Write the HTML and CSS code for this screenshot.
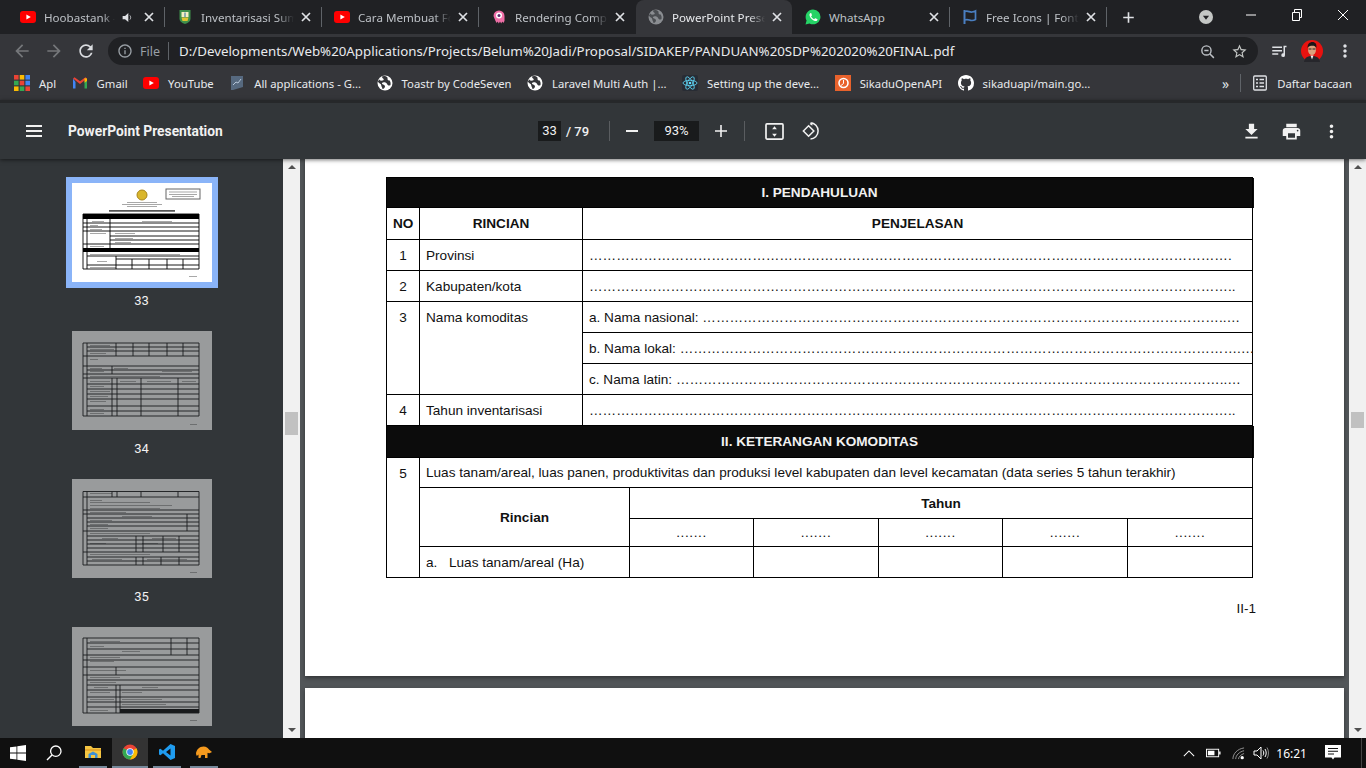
FILE: index.html
```html
<!DOCTYPE html>
<html lang="en">
<head>
    <meta charset="UTF-8">
    <meta name="viewport" content="width=device-width, initial-scale=1.0">
    <title>PowerPoint Presentation</title>
    <link rel="stylesheet" href="styles.css">
</head>
<body>
    <svg class="defs" aria-hidden="true">
        <symbol id="i-yt" viewBox="0 0 16 16"><rect x="0" y="2" width="16" height="12" rx="3" fill="#f00"/><path d="M6.4 5.4v5.2L10.8 8z" fill="#fff"/></symbol>
        <symbol id="i-globe" viewBox="0 0 16 16"><circle cx="8" cy="8" r="7.5" fill="#fff"/><path d="M5 1.4c-.2 1.4.9 1.7 1.6 2.5.6.8-.4 1.5-1.3 1.7-1.200.3-2.200-.1-3.100-1.200L.9 6.500c.5 1.400 1.600 1.700 2.700 2.400.7.500.6 1.300.8 2.100.2.900 1 1.600 1.200 3.300l1.200-.8c1.200-1.100 1.500-2 .9-3-.7-1-2.300-.8-2.700-1.700-.4-1 .6-1.500 1.800-1.600 1.500-.1 2.400.4 3.100 1.500.6 1 1.100 1.800 2.300 1.800l1.200-.2c.5-1.700.2-3.400-.7-4.900-.9.300-1.800 0-2.100-.8-.2-.7.100-1.500-.1-2.200C8.500.6 6.500.6 5 1.400z" fill="#35363a"/></symbol>
        <symbol id="i-x" viewBox="0 0 16 16"><path d="M4 4l8 8M12 4l-8 8" stroke="#dfe1e5" stroke-width="1.700" fill="none"/></symbol>
    </svg>

    <div class="tabstrip">
        <div class="tab">
            <svg class="fav"><use href="#i-yt"/></svg>
            <span class="tab-title">Hoobastank -</span>
            <svg class="speaker" viewBox="0 0 16 16"><path d="M2 6h3l4-3.500v11L5 10H2z" fill="#dfe1e5"/><path d="M11 5.500c1.200 1.500 1.200 3.500 0 5" stroke="#dfe1e5" fill="none"/></svg>
            <svg class="tab-x"><use href="#i-x"/></svg>
        </div>
        <i class="tab-sep"></i>
        <div class="tab">
            <svg class="fav" viewBox="0 0 16 16"><path d="M2.500 1h11v8.500c0 3-2.500 4.500-5.500 5.500-3-1-5.500-2.500-5.500-5.500z" fill="#3f8f4b"/><path d="M4.500 3h7v5h-7z" fill="#f3efc2"/><path d="M4.500 8.500h7l-1 3.500H5.500z" fill="#e0c431"/><path d="M8 3.500v4.500" stroke="#2d6b9f"/></svg>
            <span class="tab-title">Inventarisasi Sum</span>
            <svg class="tab-x"><use href="#i-x"/></svg>
        </div>
        <i class="tab-sep"></i>
        <div class="tab">
            <svg class="fav"><use href="#i-yt"/></svg>
            <span class="tab-title">Cara Membuat Fo</span>
            <svg class="tab-x"><use href="#i-x"/></svg>
        </div>
        <i class="tab-sep"></i>
        <div class="tab">
            <svg class="fav" viewBox="0 0 16 16"><path d="M2.500 7a5.500 5.500 0 0111 0v5l-1.200 2-1-1.500-1.100 2-1.200-2-1.200 2-1.100-2-1 1.500-1.200-2z" fill="#ef6fa7"/><circle cx="8" cy="6.500" r="3" fill="#fff"/><circle cx="8" cy="6.500" r="1.500" fill="#5a2a6e"/></svg>
            <span class="tab-title">Rendering Comp</span>
            <svg class="tab-x"><use href="#i-x"/></svg>
        </div>
        <i class="tab-sep off"></i>
        <div class="tab active">
            <svg class="fav" viewBox="0 0 16 16"><circle cx="8" cy="8" r="7.500" fill="#8a8d91"/><path d="M5 1.400c-.2 1.400.9 1.700 1.600 2.500.6.800-.4 1.500-1.300 1.700-1.200.3-2.200-.1-3.100-1.200L.9 6.500c.5 1.400 1.600 1.700 2.700 2.400.7.500.6 1.300.8 2.100.2.900 1 1.600 1.200 3.300l1.200-.8c1.200-1.100 1.500-2 .9-3-.7-1-2.300-.8-2.700-1.700-.4-1 .6-1.500 1.800-1.600 1.500-.1 2.400.4 3.100 1.500.6 1 1.100 1.800 2.300 1.800l1.200-.2c.5-1.700.2-3.400-.7-4.900-.9.300-1.800 0-2.100-.8-.2-.7.100-1.500-.1-2.200C8.500.6 6.500.6 5 1.400z" fill="#4b4e52"/></svg>
            <span class="tab-title">PowerPoint Prese</span>
            <svg class="tab-x"><use href="#i-x"/></svg>
        </div>
        <i class="tab-sep off"></i>
        <div class="tab">
            <svg class="fav" viewBox="0 0 16 16"><path d="M8 .5a7.400 7.400 0 00-6.400 11.100L.5 15.500l4-1.100A7.400 7.400 0 108 .5z" fill="#25d366"/><path d="M5.600 4c-.9.500-1.400 1.500-1 2.800.6 2.300 3 4.700 5.300 5.200 1.300.3 2.300-.2 2.600-1.200.1-.5-.1-.7-.5-.9l-1.500-.7c-.3-.1-.5 0-.7.200l-.6.800c-1.300-.4-2.600-1.600-3.100-2.900l.6-.6c.2-.2.300-.4.200-.7L6.300 4.300C6.100 4 5.900 3.900 5.600 4z" fill="#fff"/></svg>
            <span class="tab-title plain">WhatsApp</span>
            <svg class="tab-x"><use href="#i-x"/></svg>
        </div>
        <i class="tab-sep"></i>
        <div class="tab">
            <svg class="fav" viewBox="0 0 16 16"><path d="M2.500 1v14" stroke="#4a7fc1" stroke-width="2"/><path d="M3 2.500c3-1.200 4.500 1 7 .5 1.500-.2 2.500-.5 3.500-1v8.500c-1 .6-2.300 1-3.500 1-2.500.2-4-1.800-7-.5" stroke="#4a7fc1" stroke-width="1.700" fill="none"/></svg>
            <span class="tab-title">Free Icons | Font</span>
            <svg class="tab-x"><use href="#i-x"/></svg>
        </div>
        <i class="tab-sep"></i>
        <svg class="new-tab" viewBox="0 0 16 16"><path d="M8 1.500v13M1.500 8h13" stroke="#dfe1e5" stroke-width="2"/></svg>
        <svg class="tab-search" viewBox="0 0 16 16"><circle cx="8" cy="8" r="8" fill="#c4c7c5"/><path d="M4.500 6.500h7L8 11z" fill="#202124"/></svg>
        <div class="win-btns">
            <svg viewBox="0 0 46 30"><path d="M18 15h10" stroke="#fff"/></svg>
            <svg viewBox="0 0 46 30"><path d="M18.500 12.500h7v8h-7zM20.500 12v-2.500h7v8H26" stroke="#fff" fill="none"/></svg>
            <svg viewBox="0 0 46 30"><path d="M18 10l10 10M28 10L18 20" stroke="#fff"/></svg>
        </div>
    </div>

    <div class="toolbar">
        <svg class="nav dim" viewBox="0 0 24 24"><path d="M20 11H7.830l5.590-5.590L12 4l-8 8 8 8 1.410-1.410L7.830 13H20v-2z"/></svg>
        <svg class="nav dim" viewBox="0 0 24 24"><path d="M12 4l-1.410 1.410L16.170 11H4v2h12.170l-5.580 5.590L12 20l8-8z"/></svg>
        <svg class="nav" viewBox="0 0 24 24"><path d="M17.650 6.350A7.958 7.958 0 0012 4c-4.420 0-7.990 3.580-7.990 8s3.570 8 7.990 8c3.730 0 6.840-2.550 7.730-6h-2.080A5.990 5.990 0 0112 18c-3.310 0-6-2.690-6-6s2.690-6 6-6c1.660 0 3.140.690 4.220 1.780L13 11h7V4l-2.350 2.350z"/></svg>
        <div class="omnibox">
            <svg class="omni-icon" viewBox="0 0 24 24"><path d="M11 7h2v2h-2zm0 4h2v6h-2zm1-9C6.480 2 2 6.480 2 12s4.480 10 10 10 10-4.480 10-10S17.520 2 12 2zm0 18c-4.410 0-8-3.590-8-8s3.590-8 8-8 8 3.590 8 8-3.590 8-8 8z"/></svg>
            <span class="omni-file">File</span>
            <i class="omni-sep"></i>
            <span class="omni-url">D:/Developments/Web%20Applications/Projects/Belum%20Jadi/Proposal/SIDAKEP/PANDUAN%20SDP%202020%20FINAL.pdf</span>
            <svg class="omni-zoom" viewBox="0 0 24 24"><circle cx="10.500" cy="10.500" r="6.500" fill="none" stroke="#bdc1c6" stroke-width="2"/><path d="M15.500 15.500L21 21M7.500 10.500h6" stroke="#bdc1c6" stroke-width="2"/></svg>
            <svg class="omni-star" viewBox="0 0 24 24"><path d="M22 9.240l-7.190-.620L12 2 9.190 8.630 2 9.240l5.460 4.730L5.820 21 12 17.270 18.180 21l-1.630-7.030L22 9.240zM12 15.400l-3.760 2.270 1-4.280-3.320-2.880 4.380-.380L12 6.100l1.710 4.040 4.380.380-3.320 2.880 1 4.280L12 15.400z"/></svg>
        </div>
        <svg class="queue" viewBox="0 0 24 24"><path d="M3 6h13v2H3zM3 10.500h13v2H3zM3 15h8v2H3z"/><path d="M18 5h4v2h-2v10.500a2.500 2.500 0 11-2-2.400z"/></svg>
        <svg class="avatar" viewBox="0 0 22 22"><circle cx="11" cy="11" r="11" fill="#e8120f"/><path d="M3 22c.5-4.500 4-6 8-6s7.500 1.500 8 6z" fill="#26262b"/><path d="M9.500 15.500h3l-1.500 4z" fill="#f1f1f1"/><ellipse cx="11" cy="9.500" rx="4" ry="5.500" fill="#d9a27e"/><path d="M6.700 8c-.5-4 2-6 4.800-6s4.600 2.300 3.800 6c-.7-1.800-2-2.300-4-2.300S7.500 6 6.700 8z" fill="#1b1416"/><path d="M7.500 9h3M11.500 9h3" stroke="#222"/></svg>
        <svg class="more" viewBox="0 0 24 24"><path d="M12 8c1.100 0 2-.9 2-2s-.9-2-2-2-2 .9-2 2 .9 2 2 2zm0 2c-1.100 0-2 .9-2 2s.9 2 2 2 2-.9 2-2-.9-2-2-2zm0 6c-1.100 0-2 .9-2 2s.9 2 2 2 2-.9 2-2-.9-2-2-2z"/></svg>
    </div>

    <div class="bookmarks">
        <a class="bm">
            <svg viewBox="0 0 14 14"><path fill="#ea4335" d="M0 0h4v4H0z"/><path fill="#fbbc04" d="M5 0h4v4H5z"/><path fill="#4285f4" d="M10 0h4v4h-4z"/><path fill="#34a853" d="M0 5h4v4H0z"/><path fill="#ea4335" d="M5 5h4v4H5z"/><path fill="#4285f4" d="M10 5h4v4h-4z"/><path fill="#fbbc04" d="M0 10h4v4H0z"/><path fill="#34a853" d="M5 10h4v4H5z"/><path fill="#ea4335" d="M10 10h4v4h-4z"/></svg>
            Apl
        </a>
        <a class="bm">
            <svg viewBox="0 0 16 16"><path d="M1 3.500v10h2.500V7z" fill="#4285f4"/><path d="M12.500 7v6.500H15v-10z" fill="#34a853"/><path d="M1 3.500L8 9l7-5.500-1.500-1.300L8 6.300 2.500 2.200z" fill="#ea4335"/><path d="M12.500 3.300L15 3.500V6l-2.500 1.800z" fill="#fbbc04"/></svg>
            Gmail
        </a>
        <a class="bm"><svg><use href="#i-yt"/></svg>YouTube</a>
        <a class="bm">
            <svg viewBox="0 0 16 16"><path d="M2 1h12v11l-10 3H2z" fill="#56697f"/><path d="M4 10l3-3 2 1 3-4" stroke="#b6c6d8" fill="none"/></svg>
            All applications - G...
        </a>
        <a class="bm"><svg><use href="#i-globe"/></svg>Toastr by CodeSeven</a>
        <a class="bm"><svg><use href="#i-globe"/></svg>Laravel Multi Auth |...</a>
        <a class="bm">
            <svg viewBox="0 0 16 16"><rect width="16" height="16" rx="2" fill="#282c34"/><g fill="none" stroke="#61dafb" stroke-width=".8"><ellipse cx="8" cy="8" rx="7" ry="2.700"/><ellipse cx="8" cy="8" rx="7" ry="2.700" transform="rotate(60 8 8)"/><ellipse cx="8" cy="8" rx="7" ry="2.700" transform="rotate(120 8 8)"/></g><circle cx="8" cy="8" r="1.300" fill="#61dafb"/></svg>
            Setting up the deve...
        </a>
        <a class="bm">
            <svg viewBox="0 0 16 16"><rect width="16" height="16" fill="#e8622c"/><circle cx="8.500" cy="8" r="4.500" fill="none" stroke="#fff" stroke-width="1.600"/><path d="M8.500 5v3.500L6 10.500" stroke="#fff" fill="none"/></svg>
            SikaduOpenAPI
        </a>
        <a class="bm">
            <svg viewBox="0 0 16 16"><path fill="#fff" d="M8 0C3.580 0 0 3.580 0 8c0 3.540 2.290 6.530 5.470 7.590.4.070.55-.170.55-.380 0-.190-.010-.820-.010-1.490-2.010.370-2.530-.490-2.690-.940-.090-.230-.480-.940-.820-1.130-.280-.150-.680-.520-.010-.530.630-.010 1.080.580 1.230.820.720 1.210 1.870.870 2.330.660.070-.520.280-.870.510-1.070-1.780-.2-3.640-.890-3.640-3.950 0-.870.310-1.590.820-2.150-.080-.2-.360-1.020.080-2.120 0 0 .670-.210 2.200.820.640-.180 1.320-.270 2-.270.680 0 1.360.090 2 .270 1.530-1.040 2.200-.820 2.200-.820.440 1.100.160 1.920.080 2.120.510.560.820 1.270.820 2.150 0 3.070-1.870 3.750-3.650 3.950.290.250.540.730.540 1.480 0 1.070-.010 1.930-.010 2.200 0 .210.150.460.550.380A8.013 8.013 0 0016 8c0-4.420-3.580-8-8-8z"/></svg>
            sikaduapi/main.go...
        </a>
        <span class="bm-more">»</span>
        <i class="bm-sep"></i>
        <a class="bm">
            <svg viewBox="0 0 16 16"><rect x="1.700" y="1" width="12.600" height="14" rx="1" fill="none" stroke="#dfe1e5" stroke-width="1.300"/><path d="M4 4.500h2M7.500 4.500H12M4 8h2M7.500 8H12M4 11.500h2M7.500 11.500H12" stroke="#dfe1e5" stroke-width="1.300"/></svg>
            Daftar bacaan
        </a>
    </div>

    <div class="pdf-bar">
        <div class="pdf-left">
            <svg class="pdf-icon menu" viewBox="0 0 16 12"><path d="M0 1h16M0 6h16M0 11h16" stroke="#f1f1f1" stroke-width="2"/></svg>
            <span class="pdf-title">PowerPoint Presentation</span>
        </div>
        <div class="pdf-center">
            <span class="num-box page-box">33</span>
            <span class="page-total">/ 79</span>
            <i class="pdf-sep"></i>
            <svg class="pdf-icon" viewBox="0 0 14 14"><path d="M1 7h12" stroke="#f1f1f1" stroke-width="2"/></svg>
            <span class="num-box zoom-box">93%</span>
            <svg class="pdf-icon" viewBox="0 0 14 14"><path d="M1 7h12M7 1v12" stroke="#f1f1f1" stroke-width="1.600"/></svg>
            <i class="pdf-sep"></i>
            <svg class="pdf-icon fit" viewBox="0 0 20 18"><rect x="1" y="1" width="18" height="16" rx="1" fill="none" stroke="#f1f1f1" stroke-width="1.800"/><path d="M10 3.500l2.500 3h-5zM10 14.500l-2.500-3h5z" fill="#f1f1f1"/></svg>
            <svg class="pdf-icon rotate" viewBox="0 0 20 20"><path d="M2.500 10L8 4.500l5.500 5.500L8 15.500z" fill="none" stroke="#f1f1f1" stroke-width="1.600"/><path d="M10 1.500c4.500 0 8 3.500 8 8.500s-4 8.500-8 8.500" fill="none" stroke="#f1f1f1" stroke-width="1.600"/><path d="M12 .5L9 2.500 12 4.500z" fill="#f1f1f1"/></svg>
        </div>
        <div class="pdf-right">
            <svg viewBox="0 0 24 24"><path d="M19 9h-4V3H9v6H5l7 7 7-7zM5 18v2h14v-2H5z"/></svg>
            <svg viewBox="0 0 24 24"><path d="M19 8H5c-1.660 0-3 1.340-3 3v6h4v4h12v-4h4v-6c0-1.660-1.340-3-3-3zm-3 11H8v-5h8v5zm3-7c-.55 0-1-.45-1-1s.45-1 1-1 1 .45 1 1-.45 1-1 1zm-1-9H6v4h12V3z"/></svg>
            <svg viewBox="0 0 24 24"><path d="M12 8c1.100 0 2-.9 2-2s-.9-2-2-2-2 .9-2 2 .9 2 2 2zm0 2c-1.100 0-2 .9-2 2s.9 2 2 2 2-.9 2-2-.9-2-2-2zm0 6c-1.100 0-2 .9-2 2s.9 2 2 2 2-.9 2-2-.9-2-2-2z"/></svg>
        </div>
    </div>

    <div class="viewer">
        <aside class="sidebar">
            <figure class="thumb">
                <div class="thumb-frame selected">
                    <svg viewBox="0 0 140 99">
                        <rect width="140" height="99" fill="#fff"/>
                        <circle cx="70" cy="12" r="5" fill="#d9b62c" stroke="#a8851a"/>
                        <rect x="94" y="6" width="34" height="10" fill="none" stroke="#666"/>
                        <path class="tb" d="M97 8.500h28v1H97zM97 11h28v1H97zM100 13h22v1h-22zM55 19h30v1H55zM50 21h40v1H50zM55 23h30v1H55z"/>
                        <path class="tb dark" d="M37 27h66v1.800H37z"/>
                        <rect x="11" y="31" width="116" height="5" fill="#000"/>
                        <rect x="11" y="65" width="116" height="4" fill="#000"/>
                        <path class="tb" d="M20 38h12v1H20zM70 38h30v1H70zM18 42h8v1h-8zM18 46h12v1H18zM18 50h16v1H18zM43 50h20v1H43zM43 55h18v1H43zM43 59h16v1H43zM18 63h14v1H18zM18 71h90v1H18zM25 78h10v1H25zM18 84h26v1H18z"/>
                        <path class="tl" d="M11 31h116v55H11zM15 36v33M38 36v29M11 40h116M11 44h116M11 48h116M38 53h89M38 57h89M11 61h116M15 69v17M15 73h112M44 73v13M15 82h112M44 76h83M60 76v10M77 76v10M95 76v10M111 76v10"/>
                        <path class="tb" d="M117 93h8v1h-8z"/>
                    </svg>
                </div>
                <figcaption>33</figcaption>
            </figure>
            <figure class="thumb">
                <div class="thumb-frame">
                    <svg viewBox="0 0 140 99">
                        <rect width="140" height="99" fill="#fff"/>
                        <path class="tb" d="M18 14h20v1H18zM18 18h24v1H18zM18 22h16v1H18zM18 28h8v1h-8zM18 37h12v1H18zM42 37h14v1H42zM18 40h14v1H18zM90 40h30v1H90zM18 45h70v1H18zM18 50h20v1H18zM48 50h16v1H48zM75 50h24v1H75zM110 50h14v1h-14z"/>
                        <path class="tb" d="M18 55h14v1H18zM18 60h20v1H18zM18 65h18v1H18zM18 70h16v1H18zM18 78h14v1H18zM18 82h14v1H18zM118 93h7v1h-7z"/>
                        <path class="tl" d="M11 12h116v73H11zM15 12v73M44 12v13M61 12v13M77 12v13M95 12v13M111 12v13M15 16h112M15 20h112M11 25h116M11 35h116M40 35v8M15 39h112M11 43h116M11 47h116M40 47v38M45 47v38M69 47v38M106 47v38M15 53h112M15 58h112M15 63h112M15 68h112M15 75h112M15 80h112"/>
                    </svg>
                </div>
                <figcaption>34</figcaption>
            </figure>
            <figure class="thumb">
                <div class="thumb-frame">
                    <svg viewBox="0 0 140 99">
                        <rect width="140" height="99" fill="#fff"/>
                        <path class="tb" d="M18 14h22v1H18zM18 21h12v1H18zM18 23h60v1H18zM18 26h64v1H18zM78 26h22v1H78zM18 29h70v1H18zM18 33h36v1H18zM50 37h30v1H50zM18 41h22v1H18zM18 45h18v1H18zM18 49h18v1H18zM18 54h60v1H18zM30 59h16v1H30zM80 59h24v1H80zM18 64h16v1H18zM70 64h16v1H70zM18 75h60v1H18zM20 80h30v1H20zM75 80h40v1H75zM118 93h7v1h-7z"/>
                        <path class="tl" d="M11 12.500h116V86H11zM15 12.500V86M40 12.500V18M45 12.500V18M69 12.500V18M106 12.500V18M11 18h116M11 31h116M11 35h116M115 35v17M15 39h112M15 43h112M15 47h112M11 52h116M15 57h112M64 57v16M71 57v16M91 57v16M107 57v16M15 61h112M15 65h112M15 69h112M11 73h116M15 78h112M64 78v8M71 78v8M89 78v8M107 78v8M15 82h112"/>
                    </svg>
                </div>
                <figcaption>35</figcaption>
            </figure>
            <figure class="thumb">
                <div class="thumb-frame">
                    <svg viewBox="0 0 140 99">
                        <rect width="140" height="99" fill="#fff"/>
                        <rect x="48" y="82" width="79" height="4" fill="#000"/>
                        <path class="tb" d="M18 14h30v1H18zM18 19h14v1H18zM50 24h18v1H50zM18 30h30v1H18zM18 34h24v1H18zM18 43h36v1H18zM18 50h30v1H18zM18 55h26v1H18zM22 60h14v1H22zM70 60h16v1H70zM18 65h20v1H18zM50 65h20v1H50zM18 72h24v1H18zM50 72h40v1H50zM50 77h44v1H50zM18 83h18v1H18zM118 93h7v1h-7z"/>
                        <path class="tl" d="M11 11h116v75H11zM15 11v75M99 11v17M115 11v17M15 16h112M15 22h112M11 28h116M11 33h116M11 40h116M44 40v8M11 48h116M15 53h112M15 58h112M44 58v28M48 58v28M15 63h112M15 70h112M15 75h112M15 80h112"/>
                    </svg>
                </div>
            </figure>
        </aside>
        <div class="scrollbar">
            <i class="arrow up"></i>
            <i class="thumb-bar side"></i>
            <i class="arrow down"></i>
        </div>
        <main class="pages">
            <section class="page first">
                <table class="form">
                    <colgroup>
                        <col class="c-no"><col class="c-a"><col class="c-b">
                        <col class="c-y1"><col class="c-y2"><col class="c-y1"><col class="c-y2"><col class="c-y2">
                    </colgroup>
                    <tr class="h30"><th colspan="8" class="band">I. PENDAHULUAN</th></tr>
                    <tr class="h32"><th>NO</th><th>RINCIAN</th><th colspan="6">PENJELASAN</th></tr>
                    <tr class="h31">
                        <td class="num">1</td><td>Provinsi</td>
                        <td colspan="6">…………………………………………………………………………………………………………………………….</td>
                    </tr>
                    <tr class="h31">
                        <td class="num">2</td><td>Kabupaten/kota</td>
                        <td colspan="6">……………………………………………………………………………………………………………………………..</td>
                    </tr>
                    <tr class="h31">
                        <td class="num top" rowspan="3">3</td><td class="top" rowspan="3">Nama komoditas</td>
                        <td colspan="6">a. Nama nasional: ……………………………………………………………………………………………………..…</td>
                    </tr>
                    <tr class="h31"><td colspan="6">b. Nama lokal: …………………………………………………………………………………………………………….…</td></tr>
                    <tr class="h31"><td colspan="6">c. Nama latin: …………………………………………………………………………………………………………..…</td></tr>
                    <tr class="h31">
                        <td class="num">4</td><td>Tahun inventarisasi</td>
                        <td colspan="6">……………………………………………………………………………………………………………………………..</td>
                    </tr>
                    <tr class="h32"><th colspan="8" class="band">II. KETERANGAN KOMODITAS</th></tr>
                    <tr class="h30">
                        <td class="num top" rowspan="4">5</td>
                        <td colspan="7">Luas tanam/areal, luas panen, produktivitas dan produksi level kabupaten dan level kecamatan (data series 5 tahun terakhir)</td>
                    </tr>
                    <tr class="h31"><th colspan="2" rowspan="2" class="sub">Rincian</th><th colspan="5" class="sub">Tahun</th></tr>
                    <tr class="h28">
                        <td class="year">.......</td><td class="year">.......</td><td class="year">.......</td><td class="year">.......</td><td class="year">.......</td>
                    </tr>
                    <tr class="h31">
                        <td colspan="2"><span class="marker">a.</span>Luas tanam/areal (Ha)</td>
                        <td></td><td></td><td></td><td></td><td></td>
                    </tr>
                </table>
                <p class="page-no">II-1</p>
            </section>
            <section class="page second"></section>
        </main>
        <div class="scrollbar">
            <i class="arrow up"></i>
            <i class="thumb-bar"></i>
            <i class="arrow down"></i>
        </div>
    </div>

    <footer class="taskbar">
        <svg class="task-win" viewBox="0 0 16 16"><path d="M0 2.300l6.500-.9v6.200H0zM7.300 1.300L16 0v7.600H7.300zM0 8.400h6.500v6.200L0 13.700zM7.300 8.400H16V16l-8.700-1.200z" fill="#fff"/></svg>
        <svg class="task-search" viewBox="0 0 16 16"><circle cx="9.800" cy="6.200" r="5.200" fill="none" stroke="#fff" stroke-width="1.300"/><path d="M6 10L1 15" stroke="#fff" stroke-width="1.500"/></svg>
        <div class="task-app"><svg viewBox="0 0 16 16"><path d="M0 2h6l2 2h8v10H0z" fill="#f4c542"/><path d="M0 5h16v2H0z" fill="#e8a92c"/><path d="M3.500 14v-4l4.500-2.500 4.500 2.500v4h-2.500v-3H6v3z" fill="#3d8fd6"/></svg></div>
        <div class="task-app current"><svg viewBox="0 0 16 16"><circle cx="8" cy="8" r="7.500" fill="#ea4335"/><path d="M8 8l6.500-3.700A7.500 7.500 0 018 15.500z" fill="#fbbc04"/><path d="M1.500 4.300A7.500 7.500 0 008 15.500L11.700 9z" fill="#34a853"/><circle cx="8" cy="8" r="3.700" fill="#fff"/><circle cx="8" cy="8" r="2.900" fill="#4285f4"/></svg></div>
        <div class="task-app"><svg viewBox="0 0 16 16"><path d="M11.500 0L16 2v12l-4.500 2L4 9.200 1.400 11.200 0 10.500v-5l1.400-.7L4 6.800zM11.500 4.500L7 8l4.500 3.500z" fill="#1f9cf0"/></svg></div>
        <div class="task-app last"><svg viewBox="0 0 16 16"><path d="M0 10c0-4 3.500-7.500 7.500-7.500 3 0 4.500 1.500 5.500 3l3 2.500-2.500 1.200c-1 0-1.500-.3-2-.5V14H9v-3H5.500l-1 3H2.500v-3.500L.8 12z" fill="#f59a1e"/></svg></div>
        <div class="tray">
            <svg class="tray-caret" viewBox="0 0 14 8"><path d="M1 7l6-6 6 6" fill="none" stroke="#fff" stroke-width="1.200"/></svg>
            <svg class="tray-batt" viewBox="0 0 16 10"><rect x=".5" y="1" width="13" height="8" fill="none" stroke="#fff"/><path d="M2 2.500h7v5H2zM14 3.500h1.500v3H14z" fill="#fff"/></svg>
            <svg class="tray-wifi" viewBox="0 0 14 14"><path d="M1 13C1 7 6 2 13 1M4 13c0-4 4-8 9-9M7 13c0-2.500 3-5 6-6" fill="none" stroke="#9a9a9a"/><circle cx="11" cy="11.500" r="1.800" fill="#fff"/></svg>
            <svg class="tray-vol" viewBox="0 0 16 14"><path d="M1 5h3l4-4v12L4 9H1z" fill="none" stroke="#fff"/><path d="M10 4.500c1 1.500 1 3.500 0 5M12 3c1.600 2.500 1.600 5.500 0 8" fill="none" stroke="#fff"/><path d="M14 1.500c2 3 2 8 0 11" fill="none" stroke="#888"/></svg>
            <span class="tray-time">16:21</span>
            <svg class="tray-note" viewBox="0 0 16 16"><path d="M0 0h16v12.500H9.500L8 14.500l-1.500-2H0z" fill="#fff"/><path d="M3 3.500h10M3 6.300h10M3 9h6" stroke="#101010" stroke-width="1.100"/></svg>
            <i class="tray-edge"></i>
        </div>
    </footer>
</body>
</html>
```

FILE: styles.css
```css
* {
    box-sizing: border-box;
    margin: 0;
    padding: 0;
}
html, body {
    width: 1366px;
    height: 768px;
    overflow: hidden;
}
body {
    display: flex;
    flex-direction: column;
    background: #202124;
    font-family: 'Noto Sans', 'Open Sans', sans-serif;
    font-size: 11.3px;
    color: #e8eaed;
}
.defs {
    display: none;
}
svg {
    display: block;
    flex-shrink: 0;
}
i {
    display: block;
    flex-shrink: 0;
}

/* tab strip */
.tabstrip {
    height: 34px;
    display: flex;
    align-items: center;
    padding-left: 8px;
    background: #202124;
    flex-shrink: 0;
}
.tab {
    width: 156px;
    height: 34px;
    display: flex;
    align-items: center;
    padding: 0 7px 0 12px;
    font-size: 11.6px;
    color: #bdc1c6;
    flex-shrink: 0;
}
.tab.active {
    background: #35363a;
    border-radius: 8px 8px 0 0;
    color: #e8eaed;
}
.tab-sep {
    width: 1px;
    height: 20px;
    background: #5f6368;
}
.tab-sep.off {
    background: transparent;
}
.fav {
    width: 16px;
    height: 16px;
    margin-right: 8px;
}
.tab-title {
    flex: 1;
    min-width: 0;
    white-space: nowrap;
    -webkit-mask-image: linear-gradient(90deg, #000 82%, transparent 100%);
    mask-image: linear-gradient(90deg, #000 82%, transparent 100%);
}
.tab-title.plain {
    -webkit-mask-image: none;
    mask-image: none;
}
.speaker {
    width: 13px;
    height: 13px;
    margin: 0 3px 0 6px;
}
.tab-x {
    width: 16px;
    height: 16px;
    margin-left: 4px;
}
.new-tab {
    width: 13px;
    height: 13px;
    margin-left: 15px;
}
.tab-search {
    width: 14px;
    height: 14px;
    margin-left: 64px;
}
.win-btns {
    display: flex;
    margin-left: 15px;
    margin-top: -4px;
}
.win-btns svg {
    width: 46px;
    height: 30px;
}

/* address bar */
.toolbar {
    height: 34px;
    background: #35363a;
    display: flex;
    align-items: center;
    flex-shrink: 0;
    padding-left: 12px;
}
.nav {
    width: 20px;
    height: 20px;
    margin-right: 12px;
    fill: #dadce0;
}
.nav.dim {
    fill: #75777a;
}
.omnibox {
    width: 1150px;
    height: 28px;
    margin-left: 0;
    background: #202124;
    border-radius: 14px;
    display: flex;
    align-items: center;
    padding: 0 9px;
}
.omni-icon {
    width: 16px;
    height: 16px;
    fill: #9aa0a6;
}
.omni-file {
    margin-left: 7px;
    font-size: 12.500px;
    color: #9aa0a6;
}
.omni-sep {
    width: 1px;
    height: 18px;
    margin: 0 10px 0 8px;
    background: #5f6368;
}
.omni-url {
    flex: 1;
    font-size: 13.300px;
    color: #e8eaed;
    white-space: nowrap;
}
.omni-zoom, .omni-star {
    width: 17px;
    height: 17px;
}
.omni-star {
    margin-left: 15px;
    margin-right: 1px;
    fill: #c4c7c5;
}
.queue {
    width: 18px;
    height: 18px;
    margin-left: 12px;
    fill: #dfe1e5;
}
.avatar {
    width: 22px;
    height: 22px;
    margin-left: 13px;
}
.more {
    width: 20px;
    height: 20px;
    margin-left: 12px;
    fill: #dfe1e5;
}

/* bookmarks */
.bookmarks {
    height: 32px;
    background: #35363a;
    display: flex;
    align-items: center;
    gap: 15.500px;
    padding: 0 0 2px 14px;
    flex-shrink: 0;
}
.bm {
    display: flex;
    align-items: center;
    gap: 9px;
    color: #e8eaed;
    white-space: nowrap;
}
.bm svg {
    width: 16px;
    height: 16px;
}
.bm-more {
    margin-left: auto;
    margin-right: -5px;
    font-size: 14px;
    color: #dfe1e5;
}
.bm-sep {
    width: 1px;
    height: 18px;
    margin-right: -4px;
    background: #5f6368;
}
.bm:last-child {
    margin-right: 14px;
}

/* pdf toolbar */
.pdf-bar {
    height: 59px;
    border-top: 3px solid #26282a;
    background: #323639;
    display: grid;
    grid-template-columns: 538px auto 1fr;
    align-items: center;
    flex-shrink: 0;
    position: relative;
    z-index: 2;
    box-shadow: 0 1px 4px rgba(0, 0, 0, .55);
    font-family: Roboto, sans-serif;
    color: #f1f1f1;
}
.pdf-left {
    display: flex;
    align-items: center;
    padding-left: 26px;
}
.pdf-icon {
    width: 14px;
    height: 14px;
}
.menu {
    width: 16px;
    height: 12px;
    margin-right: 26px;
}
.pdf-title {
    font-size: 13.800px;
    font-weight: 700;
    color: #f1f1f1;
}
.pdf-center {
    display: flex;
    align-items: center;
    gap: 0;
    font-size: 13px;
}
.num-box {
    height: 20px;
    line-height: 20px;
    text-align: center;
    background: #191b1c;
    color: #f1f1f1;
}
.page-box {
    width: 23px;
}
.page-total {
    margin-left: 5px;
    width: 27px;
    font-weight: 500;
    white-space: nowrap;
}
.pdf-sep {
    width: 1px;
    height: 20px;
    background: #5a5d60;
}
.page-total + .pdf-sep {
    margin: 0 15px 0 16px;
}
.zoom-box {
    width: 45px;
    margin: 0 15px;
}
.zoom-box + svg + .pdf-sep {
    margin: 0 20px 0 16px;
}
.fit {
    width: 19px;
    height: 17px;
}
.rotate {
    width: 19px;
    height: 20px;
    margin-left: 17px;
}
.pdf-right {
    display: flex;
    justify-content: flex-end;
    gap: 19px;
    padding-right: 24px;
}
.pdf-right svg {
    width: 21px;
    height: 21px;
    fill: #f1f1f1;
}

/* main area */
.viewer {
    flex: 1;
    min-height: 0;
    display: flex;
    background: #525659;
    overflow: hidden;
}
.sidebar {
    width: 283px;
    flex-shrink: 0;
    background: #323639;
    display: flex;
    flex-direction: column;
    align-items: center;
    padding-top: 18px;
    overflow: hidden;
}
.thumb {
    flex-shrink: 0;
    margin-bottom: 15px;
}
.thumb figcaption {
    height: 18px;
    margin-top: 4px;
    line-height: 18px;
    text-align: center;
    font-family: Roboto, sans-serif;
    font-size: 13px;
    color: #f1f1f1;
}
.thumb-frame {
    width: 152px;
    height: 111px;
    padding: 6px;
}
.thumb-frame.selected {
    background: #8ab4f8;
}
.thumb-frame svg {
    width: 140px;
    height: 99px;
    opacity: .5;
    filter: blur(.3px);
}
.thumb-frame.selected svg {
    opacity: 1;
}
.tb {
    fill: #a8a8a8;
}
.tb.dark {
    fill: #555;
}
.tl {
    fill: none;
    stroke: #000;
    stroke-width: .9;
}
.scrollbar {
    width: 17px;
    flex-shrink: 0;
    background: #f1f1f1;
    display: flex;
    flex-direction: column;
    align-items: center;
}
.arrow {
    width: 0;
    height: 0;
    border-left: 4px solid transparent;
    border-right: 4px solid transparent;
}
.arrow.up {
    margin-top: 6px;
    border-bottom: 4px solid #505050;
}
.arrow.down {
    margin-top: auto;
    margin-bottom: 6px;
    border-top: 4px solid #505050;
}
.thumb-bar {
    width: 13px;
    height: 16px;
    margin-top: 243px;
    background: #c1c1c1;
}
.thumb-bar.side {
    height: 23px;
}
.pages {
    flex: 1;
    min-width: 0;
    padding: 0 5px;
    overflow: hidden;
}
.page {
    background: #fff;
    box-shadow: 0 2px 4px rgba(0, 0, 0, .4);
}
.page.first {
    height: 517px;
    padding: 18px 90px 0 81px;
}
.page.second {
    height: 200px;
    margin-top: 12px;
}

/* form table */
.form {
    width: 867px;
    table-layout: fixed;
    border-collapse: collapse;
    font-family: 'Liberation Sans', Arial, sans-serif;
    font-size: 13.600px;
    color: #111;
}
.c-no { width: 33px; }
.c-a { width: 163px; }
.c-b { width: 47px; }
.c-y1 { width: 124px; }
.c-y2 { width: 125px; }
.h28 { height: 28px; }
.h30 { height: 30px; }
.h31 { height: 31px; }
.h32 { height: 32px; }
.form th, .form td {
    border: 1px solid #000;
    padding: 0 6px;
    vertical-align: middle;
    white-space: nowrap;
}
.form th {
    font-weight: 700;
    text-align: center;
}
.form th.band {
    background: #0c0c0c;
    color: #f2f2f2;
    box-shadow: 1px 0 0 #0c0c0c;
}
.form td.num {
    padding: 0;
    text-align: center;
}
.form td.top {
    vertical-align: top;
    padding-top: 8px;
}
.form td.year {
    text-align: center;
    letter-spacing: .6px;
    padding: 0;
}
.marker {
    display: inline-block;
    width: 23px;
}
.page-no {
    margin-top: 23px;
    margin-right: -2px;
    text-align: right;
    font-family: 'Liberation Sans', Arial, sans-serif;
    font-size: 13.500px;
    color: #111;
}

/* windows taskbar */
.taskbar {
    height: 30px;
    flex-shrink: 0;
    background: #101010;
    display: flex;
    align-items: center;
}
.task-win {
    width: 16px;
    height: 16px;
    margin-left: 10px;
}
.task-search {
    width: 16px;
    height: 16px;
    margin-left: 20px;
    margin-right: 17px;
}
.task-app {
    width: 28px;
    height: 30px;
    margin-right: 5px;
    display: flex;
    align-items: center;
    justify-content: center;
    border-bottom: 2px solid #76899b;
}
.task-app svg {
    width: 16px;
    height: 16px;
}
.task-app.current {
    width: 36px;
    background: #333;
}
.task-app.last {
    margin-left: 4px;
}
.tray {
    margin-left: auto;
    display: flex;
    align-items: center;
    height: 30px;
}
.tray-caret { width: 12px; height: 7px; }
.tray-batt { width: 15px; height: 10px; margin-left: 11px; }
.tray-wifi { width: 13px; height: 13px; margin-left: 11px; }
.tray-vol { width: 16px; height: 14px; margin-left: 8px; }
.tray-time {
    margin-left: 7px;
    font-size: 12px;
    color: #fff;
}
.tray-note { width: 16px; height: 16px; margin-left: 18px; }
.tray-edge {
    width: 1px;
    height: 30px;
    margin-left: 20px;
    margin-right: 4px;
    background: #444;
}
```
